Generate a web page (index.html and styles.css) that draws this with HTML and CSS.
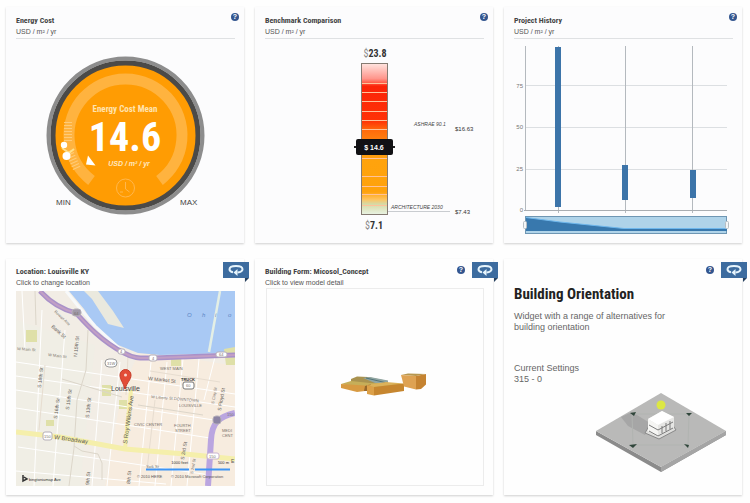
FILE: index.html
```html
<!DOCTYPE html>
<html lang="en">
<head>
<meta charset="utf-8">
<title>Energy Dashboard</title>
<link rel="stylesheet" href="styles.css">
</head>
<body>
<svg class="defs" width="0" height="0" aria-hidden="true">
  <symbol id="flip" viewBox="0 0 16 12">
    <path d="M5 8.300C2.500 7.800 1.500 6.800 1.500 5.300 1.500 3.300 4.300 2 8 2s6.500 1.300 6.500 3.300c0 1.700-1.900 2.900-5 3.200" fill="none" stroke="#e6f4fc" stroke-width="2"/>
    <path d="M5.500 8.500 9.500 5V12z" fill="#e6f4fc"/>
  </symbol>
</svg>
<main class="board">

  <section class="card">
    <header class="head ruled">
      <h2 class="title">Energy Cost</h2>
      <p class="sub">USD / m² / yr</p>
    </header>
    <button class="help" aria-label="Help">?</button>
    <svg class="chart" viewBox="16 39 219 200">
      <circle cx="125.500" cy="135.500" r="77" fill="none" stroke="#8d8d8d" stroke-width="4"/>
      <circle cx="125.500" cy="135.500" r="72.500" fill="#ff9c03" stroke="#4b4a48" stroke-width="5"/>
      <path d="M91.500 180.500A56.500 56.500 0 1 1 159.500 180.500" fill="none" stroke="#ffb33f" stroke-width="11"/>
      <path d="M68 122v20M69 151l8 18" fill="none" stroke="#ffcb78" stroke-width="8" stroke-dasharray="1 2"/>
      <path d="M62 148l7 5 5-4" fill="none" stroke="#ffe08a" stroke-width="2"/>
      <circle cx="64" cy="145" r="3.200" fill="#fff"/>
      <circle cx="66.500" cy="156" r="4" fill="#fff"/>
      <path d="M88 155.500 86 164.500 95.500 165.500z" fill="#fff"/>
      <circle cx="125.500" cy="188" r="9" fill="none" stroke="#ffb74d"/>
      <path d="M125.500 182v7l4 3M120 192h3" fill="none" stroke="#ffb74d"/>
      <text class="narrow dial-label" x="125" y="112" text-anchor="middle">Energy Cost Mean</text>
      <text class="narrow dial-value" x="125" y="151" text-anchor="middle">14.6</text>
      <text class="dial-unit" x="129" y="166" text-anchor="middle">USD / m² / yr</text>
      <text class="range" x="56" y="205">MIN</text>
      <text class="range" x="180" y="205">MAX</text>
    </svg>
  </section>

  <section class="card">
    <header class="head ruled">
      <h2 class="title">Benchmark Comparison</h2>
      <p class="sub">USD / m² / yr</p>
    </header>
    <button class="help" aria-label="Help">?</button>
    <svg class="chart" viewBox="265 39 219 200">
      <defs>
        <linearGradient id="heat" x1="0" y1="0" x2="0" y2="1">
          <stop offset="0" stop-color="#ffe5e0"/><stop offset=".1" stop-color="#ff958b"/>
          <stop offset=".13" stop-color="#ff5a45"/><stop offset=".15" stop-color="#fb2408"/>
          <stop offset=".38" stop-color="#ff3206"/><stop offset=".44" stop-color="#ff6a0c"/>
          <stop offset=".56" stop-color="#ff9212"/><stop offset=".64" stop-color="#ffa30d"/>
          <stop offset=".85" stop-color="#ffa20c"/><stop offset=".9" stop-color="#ffc35e"/>
          <stop offset=".93" stop-color="#d6d9a4"/><stop offset="1" stop-color="#e9f3e4"/>
        </linearGradient>
      </defs>
      <text class="narrow extreme" x="375" y="57" text-anchor="middle"><tspan class="currency">$</tspan>23.8</text>
      <rect x="361.500" y="63.500" width="26" height="151" fill="url(#heat)" stroke="#857b72"/>
      <path d="M362 83.500h25M362 92.500h25M362 101.500h25M362 111.500h25M362 120.500h25M362 129.500h25M362 158.500h25M362 176.500h25M362 186.500h25M362 194.500h25M362 205.500h25" stroke="#ffc29a"/>
      <path d="M354 147h41" stroke="#222" stroke-width="2"/>
      <rect x="356" y="139" width="37" height="16" rx="2" fill="#111114"/>
      <text class="marker" x="374" y="150" text-anchor="middle">$ 14.6</text>
      <text class="bench" x="414" y="126">ASHRAE 90.1</text>
      <text class="amount" x="455" y="131">$16.63</text>
      <text class="bench" x="391" y="209">ARCHITECTURE 2030</text>
      <path d="M388 211.500h62" stroke="#c9ccd0"/>
      <text class="amount" x="455" y="214">$7.43</text>
      <text class="narrow extreme" x="374" y="229" text-anchor="middle"><tspan class="currency">$</tspan>7.1</text>
    </svg>
  </section>

  <section class="card">
    <header class="head ruled">
      <h2 class="title">Project History</h2>
      <p class="sub">USD / m² / yr</p>
    </header>
    <button class="help" aria-label="Help">?</button>
    <svg class="chart" viewBox="514 39 219 200">
      <path d="M525 85.500h202M525 127.500h202M525 169.500h202" stroke="#dcdfe2"/>
      <path d="M525.500 46v164M558.500 46v167M625.500 46v167M692.500 46v167" stroke="#b4b9be"/>
      <path d="M524 210.500h203" stroke="#a9adb1"/>
      <path d="M555 47h6v160h-6zM622 165h6v35h-6zM690 170h6v28h-6z" fill="#3c74a9"/>
      <g class="axis" text-anchor="end">
        <text x="523" y="88">75</text><text x="523" y="129">50</text>
        <text x="523" y="171">25</text><text x="523" y="212">0</text>
      </g>
      <rect x="525.500" y="216.500" width="201" height="17" fill="#afd3e9" stroke="#6e96b3"/>
      <path d="M526 217.500 560 222 624 228.500H727V231H526z" fill="#3878ad"/>
      <path d="M526 217.500 560 222 624 228.500H727" fill="none" stroke="#6fb7ec"/>
      <rect x="523.500" y="221.500" width="3" height="7" rx="1" fill="#f4f6f7" stroke="#b8bec3"/>
      <rect x="725.500" y="221.500" width="3" height="7" rx="1" fill="#f4f6f7" stroke="#b8bec3"/>
    </svg>
  </section>

  <section class="card lower">
    <header class="head">
      <h2 class="title">Location: Louisville KY</h2>
      <p class="sub">Click to change location</p>
    </header>
    <button class="flip" aria-label="Flip card"><svg viewBox="0 0 16 12"><use href="#flip"/></svg></button>
    <svg class="chart map" viewBox="16 291 219 195">
      <rect x="16" y="291" width="219" height="195" fill="#f2ede5"/>
      <path d="M140 350 235 366V486H105L122 390z" fill="#f7ecdf"/>
      <path d="M16 320 95 345 80 486H16z" fill="#f0eee5"/>
      <path d="M69 291H235V353L160 355 138 353 118 345 96 327 84 309z" fill="#a9c9f4"/>
      <path d="M84 291 92 299 108 324 124 328 113 311 98 291z" fill="#eae9de"/>
      <path d="M66 291 78 306 95 326 119 348" fill="none" stroke="#f7f9fa" stroke-width="3"/>
      <path d="M220 291 209 352" stroke="#e4efe5" stroke-width="2.500"/>
      <g fill="#dfe0a8"><path d="M26 330h11v12H26zM171 359h10v7h-10zM224 349l11-2v18h-9zM102 385h9v11h-9zM119 400h8v9h-8zM46 420h8v6h-8z"/></g>
      <g fill="none" stroke="#fff">
        <path d="M16 362 235 394M16 376 235 407M16 390 214 420M16 408 210 438M18 447 210 475M42 310 34 486M65 330 53 486M102 360 92 486M120 362 107 486M151 362 139 486M167 362 155 486M183 359 171 486M199 359 187 486M215 357 204 400M22 291 25 350M16 471l150 13"/>
      </g>
      <g fill="none" stroke="#dcd6ca">
        <path d="M35 291 36 325M88 330 86 370 77 400 74 448 69 486M74 446 82 451 98 454 102 463V480M138 405l65 10M62 379l60 18"/>
        <path d="M128 356 126 395M150 371l70 11M45 365 39 430M155 400l-8 70" stroke="#e7ddd0"/>
      </g>
      <path d="M16 432 60 437 125 449 185 454 235 459" fill="none" stroke="#f5efab" stroke-width="5"/>
      <path d="M131 390 125 449" stroke="#f5efab" stroke-width="4"/>
      <path d="M40 291C50 302 60 309 76 313 86 324 101 341 124 353 135 359 140 358 154 358L235 355" fill="none" stroke="#a991c9" stroke-width="5"/>
      <path d="M40 291C50 302 60 309 76 313 86 324 101 341 124 353 135 359 140 358 154 358L235 355" fill="none" stroke="#c29fc5" stroke-width="2"/>
      <path d="M235 413C219 417 212 422 211 440L208 486" fill="none" stroke="#baa5e0" stroke-width="6"/>
      <g fill="#fff" stroke="#b5afb8">
        <rect x="72" y="309" width="9" height="7" rx="3" fill="#a099a8"/><rect x="118" y="349" width="7" height="5" rx="2"/>
        <rect x="149" y="355" width="8" height="6" rx="2"/><rect x="216" y="352" width="11" height="5" rx="2"/>
        <rect x="105" y="359" width="12" height="8" rx="4" stroke="#999"/><rect x="43" y="432" width="9" height="8" rx="2"/>
        <rect x="183" y="382" width="11" height="7" rx="2" stroke="#777"/><rect x="213" y="416" width="8" height="8" rx="3" fill="#8c84a4"/>
        <rect x="207" y="453" width="12" height="6" rx="2" stroke="#c9b3cf"/>
      </g>
      <g class="street">
        <text x="74" y="315">64</text><text x="120" y="353">4</text><text x="152" y="360">4</text><text x="219" y="356">64</text>
        <text x="107" y="365">31W</text><text x="44" y="438">150</text><text x="186" y="387">60</text><text x="209" y="458">150</text><text x="227" y="416">150</text>
        <text transform="translate(54 312) rotate(43)">Rowan Ave</text>
        <text class="road" transform="translate(51 327) rotate(42)">Bank St</text>
        <text transform="translate(17 350) rotate(4)">W Main St</text>
        <text transform="translate(48 356) rotate(7)">W Main St</text>
        <text class="road" transform="translate(77 357) rotate(-84)">N 15th St</text>
        <text class="road" transform="translate(41 388) rotate(-84)">S 18th St</text>
        <text class="road" transform="translate(57 419) rotate(-82)">S 16th St</text>
        <text class="road" transform="translate(69 410) rotate(-82)">S 15th St</text>
        <text class="road" transform="translate(89 418) rotate(-84)">S 13th St</text>
        <text class="avenue" transform="translate(127 444) rotate(-82)">S Roy Wilkins Ave</text>
        <text class="road" transform="translate(148 380) rotate(6)">W Market St</text>
        <text class="bold" x="181" y="381">TRUCK</text>
        <text transform="translate(151 398) rotate(5)">W Liberty St DOWNTOWN</text>
        <text x="179" y="407">LOUISVILLE</text><text x="160" y="370">WEST MAIN</text>
        <text x="134" y="426">CIVIC CENTER</text><text x="174" y="427">FOURTH</text><text x="175" y="432">STREET</text>
        <text x="222" y="432">MEDI</text><text x="222" y="437">CENT</text>
        <text class="road" transform="translate(184 460) rotate(-80)">S 3rd St</text>
        <text transform="translate(193 474) rotate(-80)">S 2nd St</text>
        <text transform="translate(214 404) rotate(-80)">S Clay St</text>
        <text class="road" transform="translate(221 411) rotate(-80)">S Floyd St</text>
        <text class="road" transform="translate(89 485) rotate(-84)">9th St</text>
        <text class="road" transform="translate(130 484) rotate(-84)">8th St</text>
        <text class="avenue" transform="translate(54 439) rotate(8)">W Broadway</text>
        <text x="146" y="468">York St</text><text class="road" x="231" y="463">E</text>
      </g>
      <g class="river"><text x="187" y="317">O</text><text x="202" y="317">h</text><text x="215" y="317">i</text><text x="228" y="317">o</text></g>
      <text class="city" x="111" y="391">Louisville</text>
      <path d="M125 389C123 382 120 380 120 375a5 5 0 0 1 11 0c0 5-4 7-6 14z" fill="#e34c37" stroke="#c63c29"/>
      <circle cx="125.500" cy="375" r="1.500" fill="#f8d8cf"/>
      <path d="M146 469.500h43M195 469.500h35" stroke="#3d94f5" stroke-width="2"/>
      <text class="scale" x="188" y="464" text-anchor="end">1000 feet</text><text class="scale" x="229" y="464" text-anchor="end">500 m</text>
      <path d="M23 475v6l4-2-3-2" fill="none" stroke="#333" stroke-width="1.500"/>
      <text class="scale" x="29" y="481">bingtoniamap Ave</text>
      <text class="copy" x="137" y="478">© 2010 HERE</text><text class="copy" x="171" y="478">© 2010 Microsoft Corporation</text>
    </svg>
  </section>

  <section class="card lower">
    <header class="head">
      <h2 class="title">Building Form: Micosol_Concept</h2>
      <p class="sub">Click to view model detail</p>
    </header>
    <button class="help" aria-label="Help">?</button>
    <button class="flip" aria-label="Flip card"><svg viewBox="0 0 16 12"><use href="#flip"/></svg></button>
    <svg class="chart" viewBox="265 288 219 198">
      <rect x="266.500" y="288.500" width="217" height="197" fill="#fefefe" stroke="#ececec"/>
      <path d="M351 379 357 376.500 368 377 388 381V386L351 384z" fill="#a9924f"/>
      <path d="M363 378 370 377 388 380.500V384L380 385z" fill="#8fa5a3"/>
      <path d="M366 378 387 383" stroke="#547579"/>
      <path d="M341 384 351 381 370 383 404 384 386 388 366 389z" fill="#c6ae59"/>
      <path d="M341 384 365 385.500V391L357 392 341 388z" fill="#d79a42"/>
      <path d="M365 386 371 384V391L364 391z" fill="#98682b"/>
      <path d="M367 385 386 382 404 383.500 374 387z" fill="#dcb25a"/>
      <path d="M367 385 374 387V395.500L367 394z" fill="#dca048"/>
      <path d="M374 387 404 383.500V391L374 395.500z" fill="#c6862f"/>
      <path d="M401 375 408 373.500 426 374 416 376z" fill="#b7974e"/>
      <path d="M401 375 416 376V389.500L404 386.500z" fill="#dea253"/>
      <path d="M416 376 426 374V384.500L421 389 416 389.500z" fill="#c58331"/>
    </svg>
  </section>

  <section class="card lower orientation">
    <button class="help" aria-label="Help">?</button>
    <button class="flip" aria-label="Flip card"><svg viewBox="0 0 16 12"><use href="#flip"/></svg></button>
    <h2 class="headline">Building Orientation</h2>
    <p class="copytext">Widget with a range of alternatives for building orientation</p>
    <p class="copytext setting">Current Settings<br>315 - 0</p>
    <svg class="chart" viewBox="514 389 219 97">
      <path d="M596 432 661 468 726 432V436L661 473 596 436z" fill="#8b8b8b"/>
      <path d="M661 468 726 432V436L661 473z" fill="#a5a5a5"/>
      <path d="M661 394 726 432 661 468 596 432z" fill="#b9b9b8"/>
      <path d="M621 418 632 413 650 424 645 436 628 427z" fill="#a6a6a6"/>
      <path d="M632 415 689 415 688 446 633 446z" fill="none" stroke="#b1b4b1"/>
      <path d="M630 414 636 413 634 417zM686 414 692 414 689 417zM629 446 637 445 633 449zM684 445 689 446 688 449z" fill="#30463b"/>
      <path d="M645 434 659 440 676 431 672 425 649 427z" fill="#dededc" stroke="#888"/>
      <path d="M648 420 662 412 674 418V429L658 438 648 432z" fill="#e6e6e4"/>
      <path d="M648 420 662 412 674 418 658 426z" fill="#fff"/>
      <path d="M648 420 658 426V438L648 432z" fill="#f5f5f3"/>
      <path d="M649 426l9 5 15-8M649 432l9 5 15-8M662 427v7M666 424v8M670 422v8" fill="none" stroke="#7b7b7b"/>
      <circle cx="661" cy="406" r="4.500" fill="#dce743"/>
    </svg>
  </section>
</main>
</body>
</html>
```

FILE: styles.css
```css
* { box-sizing: border-box; }

body {
  margin: 0;
  background: #fefefe;
  color: #444;
  font-family: "Liberation Sans", Arial, sans-serif;
}

h2, p { margin: 0; }
.defs { display: block; }

.board {
  display: grid;
  grid-template-columns: repeat(3, minmax(0, 1fr));
  gap: 16px 11px;
  padding: 7px 8px 8px 6px;
}

.card {
  position: relative;
  padding: 8px 9px 4px 10px;
  background: #fcfcfd;
  box-shadow: 0 1px 2px #cfcfcf;
}

.lower {
  padding-top: 7px;
  padding-bottom: 9px;
  background: #fefefe;
}

.ruled {
  padding-bottom: 1px;
  border-bottom: 1px solid #dfe1e3;
}

.title, .headline, .narrow {
  font-family: "Roboto Condensed", Roboto, "Liberation Sans", sans-serif;
  font-weight: bold;
}

.title { font-size: 8px; line-height: 11px; color: #444; }
.sub { font-size: 7px; line-height: 11px; color: #555; }

.chart { display: block; width: 100%; height: auto; }
.map { margin-top: 3px; }

.help {
  position: absolute;
  top: 6px;
  right: 5px;
  width: 8px;
  height: 8px;
  padding: 0;
  border: 0;
  border-radius: 50%;
  background: #34568f;
  color: #fff;
  font: bold 7px/8px "Liberation Sans", sans-serif;
}

.lower .help { top: 7px; right: 28px; }

.flip {
  position: absolute;
  top: 3px;
  right: -5px;
  width: 26px;
  height: 16px;
  padding: 2px 5px;
  border: 0;
  background: #3d6c9f;
}

.flip svg { display: block; width: 16px; height: 12px; }

.flip::after {
  content: "";
  position: absolute;
  top: 100%;
  right: 0;
  border-top: 4px solid #27415f;
  border-right: 4px solid transparent;
}

.dial-label { font-size: 9px; fill: #ffe3b0; }
.dial-value { font-size: 40px; fill: #fff; }
.dial-unit { font-size: 7px; font-weight: bold; font-style: italic; fill: #ffe9c2; }
.range { font-size: 8px; fill: #444; }

.extreme { font-size: 10px; fill: #333; }
.currency { font-weight: normal; fill: #888; }
.marker { font-size: 7px; font-weight: bold; fill: #fff; }
.bench { font-size: 5px; font-style: italic; fill: #444; }
.amount { font-size: 6px; fill: #333; }
.axis { font-size: 6px; fill: #777; }

.street { font-size: 4px; fill: #77716b; }
.road { font-size: 5px; fill: #5f5a55; }
.avenue { font-size: 6px; fill: #5f5a55; }
.bold { font-size: 4px; font-weight: bold; fill: #333; }
.river { font-size: 6px; font-style: italic; fill: #5c86c4; }
.city { font-size: 7px; fill: #444; }
.scale { font-size: 4px; fill: #333; }
.copy { font-size: 4px; fill: #555; }

.orientation { padding-top: 25px; }
.headline { font-size: 15px; line-height: 20px; color: #222; }
.copytext {
  max-width: 172px;
  margin-top: 7px;
  font-size: 9px;
  line-height: 11px;
  color: #666;
}
.setting { margin-top: 30px; }
.orientation .chart { margin-top: 3px; }
```
